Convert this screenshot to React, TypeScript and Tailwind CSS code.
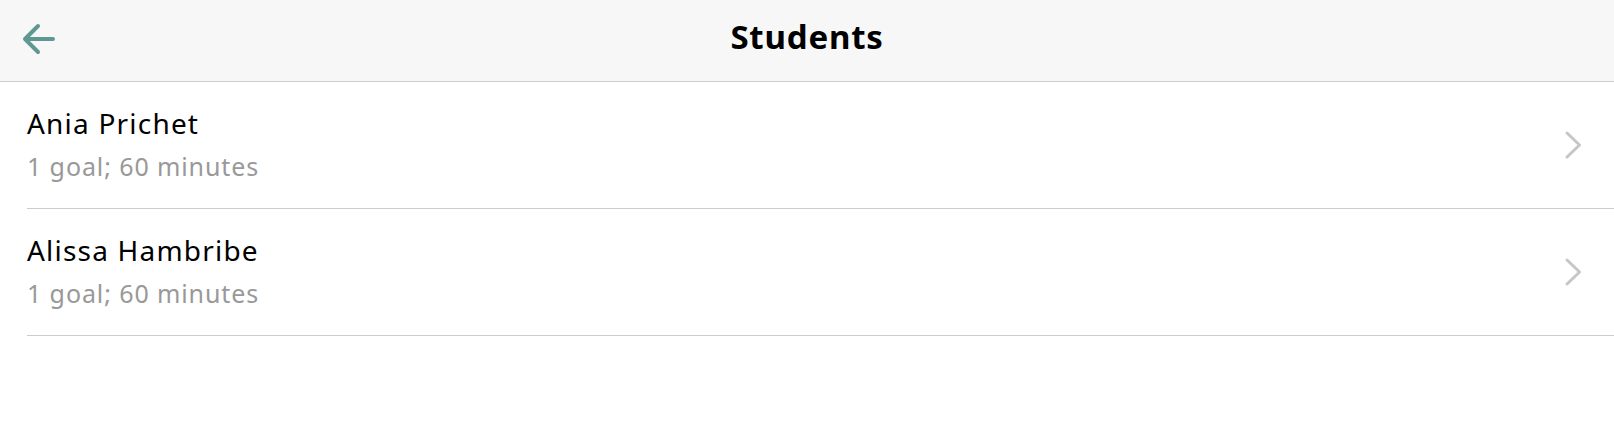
import React from "react";

const students = [
  { name: "Ania Prichet", info: "1 goal; 60 minutes" },
  { name: "Alissa Hambribe", info: "1 goal; 60 minutes" },
];

function Chevron() {
  return (
    <svg width="20" height="30" viewBox="0 0 20 30" fill="none">
      <path d="M3 3 L15.5 15 L3 27" stroke="#c6c6c6" strokeWidth="3" strokeLinecap="round" strokeLinejoin="round" />
    </svg>
  );
}

export default function App() {
  return (
    <div className="w-[1614px] h-[423px] bg-white" style={{ fontFamily: "'Noto Sans', sans-serif" }}>
      <div className="h-[82px] bg-[#f7f7f7] border-b border-[#cccccc] grid grid-cols-[1fr_auto_1fr] items-center">
        <div className="pl-[21px] mb-[4px] flex items-center">
          <svg width="36" height="34" viewBox="0 0 36 34" fill="none">
            <path d="M4 17 H32 M17 4 L4 17 L17 30" stroke="#5f9892" strokeWidth="4" strokeLinecap="round" strokeLinejoin="round" />
          </svg>
        </div>
        <div className="text-[33px] font-bold text-black leading-none tracking-[0.8px] mb-[8px]">Students</div>
        <div />
      </div>
      <div className="flex flex-col">
        {students.map((s) => (
          <div key={s.name} className="ml-[27px] h-[127px] border-b border-[#cccccc] flex items-center justify-between pr-[30px]">
            <div className="flex flex-col">
              <div className="text-[28px] leading-[43px] tracking-[1.2px] text-black">{s.name}</div>
              <div className="text-[25px] leading-[43px] tracking-[0.9px] text-[#999999]">{s.info}</div>
            </div>
            <Chevron />
          </div>
        ))}
      </div>
    </div>
  );
}
